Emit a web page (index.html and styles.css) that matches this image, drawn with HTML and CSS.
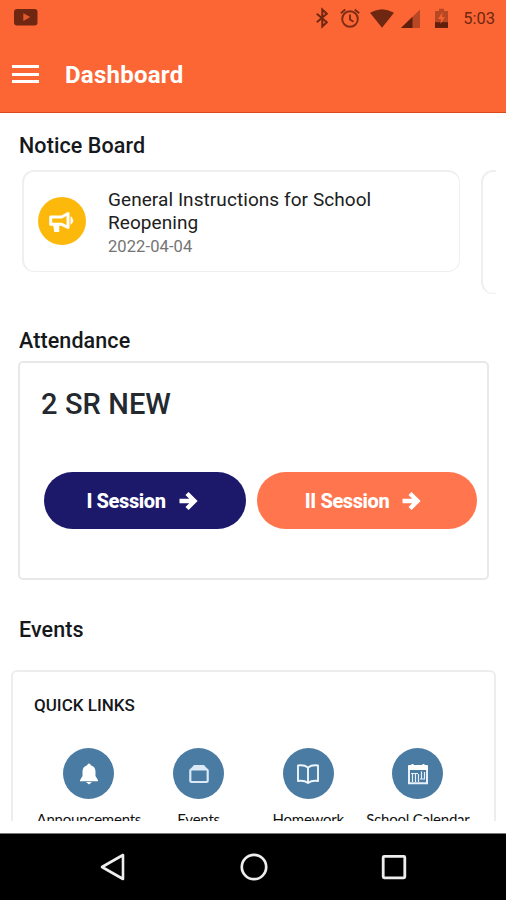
FILE: index.html
```html
<!DOCTYPE html>
<html lang="en">
<head>
<meta charset="utf-8">
<title>Dashboard</title>
<link rel="stylesheet" href="styles.css">
</head>
<body>
<div class="phone">
  <header class="header">
    <div class="status">
      <svg class="yt" width="24" height="18" viewBox="0 0 24 18"><rect x="0" y="1" width="23.500" height="16.500" rx="3" fill="#702711"/><path d="M9.300 5.300v7.600l7-3.800z" fill="#e4582c"/></svg>
      <svg class="tray" width="134" height="22" viewBox="0 0 134 22">
        <path d="M1.800 6.800l10 8.400-4.500 4.300V2.500l4.500 4.300-10 8.400" fill="none" stroke="#702711" stroke-width="2"/>
        <g fill="none" stroke="#7b2c14" stroke-width="1.900"><circle cx="35" cy="12" r="7.800"/><path d="M35 7.500v5l3.500 2.300M25.800 6.200l4.500-3.800M44.200 6.200l-4.500-3.800"/></g>
        <path d="M55 5.700Q67-1.300 79 5.700L67 20.700z" fill="#702711"/>
        <path d="M105 2.500v18.500H86z" fill="#b84824"/><path d="M97.500 9.800v11.200H86z" fill="#5f1f0c"/>
        <path d="M124 1.700h5v2.200h4v17h-13v-17h4z" fill="#b84824"/><path d="M120 15.200h13v5.700h-13z" fill="#5f1f0c"/><path d="M127.500 5l-4.500 7h3l-.5 5 4.500-7h-3z" fill="#f56232"/>
      </svg>
      <span class="time">5:03</span>
    </div>
    <div class="bar">
      <div class="burger"><i></i><i></i><i></i></div>
      <h1>Dashboard</h1>
    </div>
  </header>
  <main class="content">
    <h2 class="h-notice">Notice Board</h2>
    <div class="notices">
      <article class="notice">
        <div class="horn"><svg width="28" height="24" viewBox="0 0 28 24"><path d="M2.700 8h11L20 4.500v14l-6.300-3.200h-11z" fill="none" stroke="#fff" stroke-width="3" stroke-linejoin="round"/><path d="M5 15.500h6.200V23H6.300zM22.500 7q5.500 4.500 0 9z" fill="#fff"/></svg></div>
        <div class="notice-text"><p>General Instructions for School Reopening</p><time>2022-04-04</time></div>
      </article>
      <article class="notice next"></article>
    </div>
    <h2 class="h-att">Attendance</h2>
    <section class="attendance">
      <h3>2 SR NEW</h3>
      <div class="sessions">
        <button class="btn first"><span>I Session</span><svg width="20" height="20" viewBox="0 0 20 20"><path d="M1.500 10h14M9 2.500L16.500 10 9 17.500" fill="none" stroke="#fff" stroke-width="4.400"/></svg></button>
        <button class="btn second"><span>II Session</span><svg width="20" height="20" viewBox="0 0 20 20"><path d="M1.500 10h14M9 2.500L16.500 10 9 17.500" fill="none" stroke="#fff" stroke-width="4.400"/></svg></button>
      </div>
    </section>
    <h2 class="h-events">Events</h2>
    <section class="quick">
      <h4>QUICK LINKS</h4>
      <div class="links">
        <div class="link"><div class="dot"><svg width="24" height="24" viewBox="0 0 24 24"><path d="M12 1.500q1.500 0 1.800 1.700c3.200.8 4.700 3.300 4.700 6.300v4.500l2.500 4.200v1H3v-1L5.500 14V9.500c0-3 1.500-5.500 4.700-6.300Q10.500 1.500 12 1.500zM9 20h6l-3 2.500z" fill="#fff"/></svg></div><span>Announcements</span></div>
        <div class="link"><div class="dot"><svg width="24" height="24" viewBox="0 0 24 24"><path d="M3 7.500L7 3h10l4 4.500z" fill="#dbe9f7"/><rect x="3.300" y="7.500" width="17.400" height="12.500" rx="1.200" fill="none" stroke="#dbe9f7" stroke-width="2.200"/></svg></div><span>Events</span></div>
        <div class="link"><div class="dot"><svg width="24" height="24" viewBox="0 0 24 24"><path d="M12 5.500Q8 2.500 2 3.500V19q6-1 10 2 4-3 10-2V3.500q-6-1-10 2V21" fill="none" stroke="#eef5fc" stroke-width="1.900" stroke-linejoin="round"/></svg></div><span>Homework</span></div>
        <div class="link"><div class="dot"><svg width="24" height="24" viewBox="0 0 24 24"><path d="M3 3h2.500V2h2v1h9V2h2v1H21q1 0 1 1v4H2V4q0-1 1-1z" fill="#fff"/><path d="M3 8v13.200h18V8" fill="none" stroke="#e8f1fa" stroke-width="2"/><path d="M6.500 20v-8M9.500 20v-8.500M12.500 20v-8M15.500 16.500v-7M18.500 17v-7M5 11.500h7M14 17h5" fill="none" stroke="#e8f1fa" stroke-width="1.200"/></svg></div><span>School Calendar</span></div>
      </div>
    </section>
  </main>
  <nav class="nav">
    <svg width="28" height="30" viewBox="0 0 28 30"><path d="M24 3v24L3 15z" fill="none" stroke="#eee" stroke-width="2.600" stroke-linejoin="round"/></svg>
    <svg width="28" height="30" viewBox="0 0 28 30"><circle cx="14" cy="15" r="12.200" fill="none" stroke="#eee" stroke-width="2.700"/></svg>
    <svg width="28" height="30" viewBox="0 0 28 30"><rect x="3.200" y="4.400" width="21.600" height="21.400" rx="1" fill="none" stroke="#eee" stroke-width="2.800"/></svg>
  </nav>
</div>
</body>
</html>
```
FILE: styles.css
```css
* { box-sizing: border-box; }
body { margin: 0; background: #fff; font-family: Roboto, "Liberation Sans", sans-serif; color: #16181b; }
h1, h2, h3, h4, p { margin: 0; font-weight: 500; white-space: nowrap; }
svg { display: block; flex: none; }
.phone { width: 506px; height: 900px; display: flex; flex-direction: column; overflow: hidden; }
.header { height: 113px; flex: none; background: #fc6634; border-bottom: 1px solid #db4a1c; }
.status { height: 36px; display: flex; align-items: center; padding: 0 11px 0 14px; }
.yt { margin-top: -2px; }
.tray { margin-left: 276.500px; margin-top: -1px; }
.time { margin-left: auto; font-size: 16.500px; color: #702711; }
.bar { height: 76px; display: flex; align-items: center; padding-left: 12px; }
.burger { width: 27px; display: grid; gap: 4.500px; }
.burger i { height: 3px; background: #fff; }
h1 { font-size: 24px; font-weight: 700; color: #fff; margin-left: 26px; letter-spacing: .25px; padding-top: 1px; }
.content { height: 708px; flex: none; overflow: hidden; }
h2 { font-size: 21.500px; line-height: 24px; margin-left: 19px; letter-spacing: .1px; }
.h-notice { margin-top: 21px; }
.notices { display: flex; align-items: flex-start; gap: 21px; margin: 12px 10px 0 22px; overflow: hidden; }
.notice { width: 438px; height: 102px; flex: none; display: flex; padding: 0 16px 0 15px; border: 2px solid #efefef; border-right-width: 1px; border-bottom-width: 1px; border-radius: 12px; }
.notice.next { height: 124px; }
.horn { width: 48px; height: 48px; flex: none; margin: 25px 22px 0 -1px; border-radius: 50%; background: #fdb90b; display: grid; place-items: center; }
.notice-text { padding-top: 16px; }
.notice-text p { font-size: 19px; line-height: 23px; font-weight: 400; white-space: normal; width: 290px; color: #202020; letter-spacing: .07px; }
.notice-text time { display: block; font-size: 16.500px; line-height: 25px; color: #747474; letter-spacing: .1px; }
.h-att { margin-top: 35px; }
.attendance { width: 471px; height: 219px; margin: 8px 0 0 18px; padding: 23px 10px 0 24px; border: 2px solid #e6e8e9; border-radius: 5px; }
h3 { font-size: 29px; line-height: 36px; color: #23292e; margin-left: -3px; letter-spacing: .1px; }
.sessions { display: flex; gap: 11px; margin-top: 50px; }
.btn { height: 57px; border: 0; border-radius: 29px; color: #fff; font: 800 20px/24px Roboto, sans-serif; letter-spacing: -.4px; display: flex; align-items: center; justify-content: center; gap: 12px; padding: 0 6px 0 0; }
.first { width: 202px; background: #1c196b; }
.second { width: 220px; background: #ff754d; padding-right: 8px; }
.h-events { margin-top: 38px; }
.quick { width: 485px; height: 240px; margin: 28px 0 0 11px; border: 2px solid #eceeee; border-radius: 6px; padding-top: 22px; }
h4 { font-size: 17px; line-height: 22px; margin-left: 21px; }
.links { display: grid; grid-template-columns: repeat(4, 109.700px); margin: 32px 0 0 21px; }
.link { display: flex; flex-direction: column; align-items: center; }
.dot { width: 51px; height: 51px; border-radius: 50%; background: #4a7ba3; display: grid; place-items: center; }
.link span { margin-top: 10px; font: 400 15px/20px Lato, sans-serif; letter-spacing: -.22px; color: #111; white-space: nowrap; }
.nav { margin-top: auto; height: 67px; flex: none; background: #000; border-top: 1px solid #777; display: flex; justify-content: center; align-items: center; gap: 112.500px; padding-left: 1px; }
```
